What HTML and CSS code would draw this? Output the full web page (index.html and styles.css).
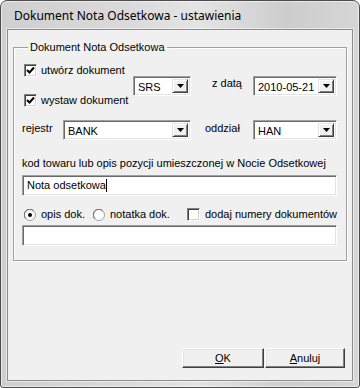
FILE: index.html
```html
<!DOCTYPE html>
<html lang="pl">
<head>
    <meta charset="UTF-8">
    <title>Dokument Nota Odsetkowa - ustawienia</title>
    <link rel="stylesheet" href="styles.css">
</head>
<body>
    <div class="window">
        <div class="titlebar">Dokument Nota Odsetkowa - ustawienia</div>
        <div class="client">
            <fieldset class="group">
                <legend>Dokument Nota Odsetkowa</legend>

                <div class="row-doc">
                    <div class="checks">
                        <div class="check">
                            <span class="box"><svg width="9" height="9" viewBox="0 0 9 9"><polyline points="1,4 3.5,6.5 8,1.5" fill="none" stroke="#000" stroke-width="2"/></svg></span>
                            <span>utwórz dokument</span>
                        </div>
                        <div class="check">
                            <span class="box"><svg width="9" height="9" viewBox="0 0 9 9"><polyline points="1,4 3.5,6.5 8,1.5" fill="none" stroke="#000" stroke-width="2"/></svg></span>
                            <span>wystaw dokument</span>
                        </div>
                    </div>
                    <div class="combo combo-srs">
                        <span class="value">SRS</span>
                        <span class="drop"><svg width="7" height="4" viewBox="0 0 7 4"><polygon points="0,0 7,0 3.5,4" fill="#000"/></svg></span>
                    </div>
                    <span class="lbl lbl-date">z datą</span>
                    <div class="combo combo-date">
                        <span class="value">2010-05-21</span>
                        <span class="drop"><svg width="7" height="4" viewBox="0 0 7 4"><polygon points="0,0 7,0 3.5,4" fill="#000"/></svg></span>
                    </div>
                </div>

                <div class="row-reg">
                    <span class="lbl lbl-reg">rejestr</span>
                    <div class="combo combo-bank">
                        <span class="value">BANK</span>
                        <span class="drop"><svg width="7" height="4" viewBox="0 0 7 4"><polygon points="0,0 7,0 3.5,4" fill="#000"/></svg></span>
                    </div>
                    <span class="lbl lbl-odd">oddział</span>
                    <div class="combo combo-date">
                        <span class="value">HAN</span>
                        <span class="drop"><svg width="7" height="4" viewBox="0 0 7 4"><polygon points="0,0 7,0 3.5,4" fill="#000"/></svg></span>
                    </div>
                </div>

                <div class="caption">kod towaru lub opis pozycji umieszczonej w Nocie Odsetkowej</div>
                <div class="edit">Nota odsetkowa<span class="caret"></span></div>

                <div class="row-opts">
                    <div class="opt opt-opis">
                        <svg class="radio" width="12" height="12" viewBox="0 0 12 12"><circle cx="6" cy="6" r="5.5" fill="#fff" stroke="#a0a0a0"/><path d="M1.8 9.6 A5 5 0 0 1 9.6 1.8" fill="none" stroke="#696969"/><circle cx="6" cy="6" r="2" fill="#000"/></svg>
                        <span>opis dok.</span>
                    </div>
                    <div class="opt opt-notatka">
                        <svg class="radio" width="12" height="12" viewBox="0 0 12 12"><circle cx="6" cy="6" r="5.5" fill="#fff" stroke="#a0a0a0"/><path d="M1.8 9.6 A5 5 0 0 1 9.6 1.8" fill="none" stroke="#696969"/></svg>
                        <span>notatka dok.</span>
                    </div>
                    <div class="opt">
                        <span class="box"></span>
                        <span>dodaj numery dokumentów</span>
                    </div>
                </div>
                <div class="edit edit-notes"></div>
            </fieldset>

            <div class="buttons">
                <button class="btn btn-ok"><u>O</u>K</button>
                <button class="btn btn-cancel"><u>A</u>nuluj</button>
            </div>
        </div>
    </div>
</body>
</html>
```

FILE: styles.css
```css
body {
    margin: 0;
    padding: 0;
    background: #fff;
}
.window {
    width: 360px;
    height: 388px;
    box-sizing: border-box;
    border: 1px solid #4c4c4c;
    border-radius: 7px 7px 3px 3px;
    background: linear-gradient(to right, #cfcfcf, #dadada 35%, #e4e4e4 55%, #cdcdcd 80%, #d6d6d6);
    box-shadow: inset 0 0 0 1px rgba(255, 255, 255, 0.55);
    padding: 0 6px 6px 6px;
    display: flex;
    flex-direction: column;
}
.titlebar {
    height: 28px;
    line-height: 29px;
    padding-left: 7px;
    font-family: "Noto Sans", "Open Sans", sans-serif;
    font-size: 12px;
    color: #000;
    white-space: nowrap;
}
.client {
    flex: 1;
    border: 1px solid #8d8d8d;
    box-shadow: 0 0 0 1px rgba(255, 255, 255, 0.5);
    background: #f0f0f0;
    padding: 11px 5px 12px 5px;
    display: flex;
    flex-direction: column;
    justify-content: space-between;
    font-family: "Liberation Sans", Arial, sans-serif;
    font-size: 11px;
    color: #000;
}
.group {
    margin: 0;
    padding: 10px 9px 14px 8px;
    border: 1px solid #a0a0a0;
    box-shadow: inset 1px 1px 0 #fff, 1px 1px 0 #fff;
    min-width: 0;
}
.group legend {
    margin-left: 6px;
    padding: 0 2px;
    line-height: 13px;
}
.row-doc {
    display: flex;
    align-items: center;
}
.checks {
    width: 111px;
    display: flex;
    flex-direction: column;
    gap: 17px;
}
.check, .opt {
    display: flex;
    align-items: center;
    height: 13px;
    line-height: 13px;
    white-space: nowrap;
}
.check .box {
    margin-left: 2px;
    margin-right: 4px;
}
.box {
    width: 13px;
    height: 13px;
    box-sizing: border-box;
    flex: none;
    background: #fff;
    border: 1px solid;
    border-color: #808080 #fff #fff #808080;
    box-shadow: inset 1px 1px 0 #404040, inset -1px -1px 0 #d4d4d4;
    display: flex;
    align-items: center;
    justify-content: center;
}
.combo {
    height: 20px;
    box-sizing: border-box;
    background: #fff;
    border: 1px solid;
    border-color: #a0a0a0 #fff #fff #a0a0a0;
    box-shadow: inset 1px 1px 0 #696969, inset -1px -1px 0 #e3e3e3;
    padding: 2px;
    display: flex;
    align-items: stretch;
    flex: none;
}
.combo .value {
    flex: 1;
    padding-left: 2px;
    line-height: 16px;
    white-space: nowrap;
}
.drop {
    width: 16px;
    box-sizing: border-box;
    background: #f0f0f0;
    border: 1px solid;
    border-color: #e3e3e3 #404040 #404040 #e3e3e3;
    box-shadow: inset 1px 1px 0 #fff, inset -1px -1px 0 #808080;
    display: flex;
    align-items: center;
    justify-content: center;
}
.combo-srs {
    width: 58px;
}
.combo-date {
    width: 84px;
}
.combo-bank {
    width: 128px;
}
.lbl {
    flex: none;
    line-height: 13px;
}
.lbl-date {
    width: 41px;
    margin-left: 21px;
    margin-bottom: 5px;
}
.row-reg {
    display: flex;
    align-items: center;
    margin-top: 13px;
}
.lbl-reg {
    width: 41px;
    margin-bottom: 4px;
}
.lbl-odd {
    width: 48px;
    margin-left: 14px;
    margin-bottom: 3px;
}
.caption {
    margin-top: 17px;
    line-height: 13px;
    white-space: nowrap;
}
.edit {
    margin-top: 5px;
    height: 21px;
    box-sizing: border-box;
    background: #fff;
    border: 1px solid;
    border-color: #a0a0a0 #fff #fff #a0a0a0;
    box-shadow: inset 1px 1px 0 #696969, inset -1px -1px 0 #e3e3e3;
    padding: 0 4px;
    line-height: 19px;
    white-space: nowrap;
    display: flex;
    align-items: center;
}
.caret {
    width: 1px;
    height: 13px;
    background: #000;
}
.edit-notes {
    margin-top: 4px;
}
.row-opts {
    display: flex;
    margin-top: 12px;
}
.opt .radio, .opt .box {
    margin-right: 5px;
}
.opt-opis {
    width: 71px;
    padding-left: 2px;
    box-sizing: border-box;
}
.opt-opis .radio {
    margin-right: 5px;
}
.opt-notatka {
    width: 94px;
}
.buttons {
    display: flex;
    justify-content: flex-end;
    gap: 1px;
    padding-right: 2px;
}
.btn {
    height: 20px;
    box-sizing: border-box;
    background: #f0f0f0;
    border: 1px solid;
    border-color: #fff #404040 #404040 #fff;
    box-shadow: inset -1px -1px 0 #808080, inset 1px 1px 0 #e3e3e3;
    font-family: "Liberation Sans", Arial, sans-serif;
    font-size: 11px;
    color: #000;
    padding: 0;
}
.btn-ok {
    width: 82px;
}
.btn-cancel {
    width: 80px;
}
```
